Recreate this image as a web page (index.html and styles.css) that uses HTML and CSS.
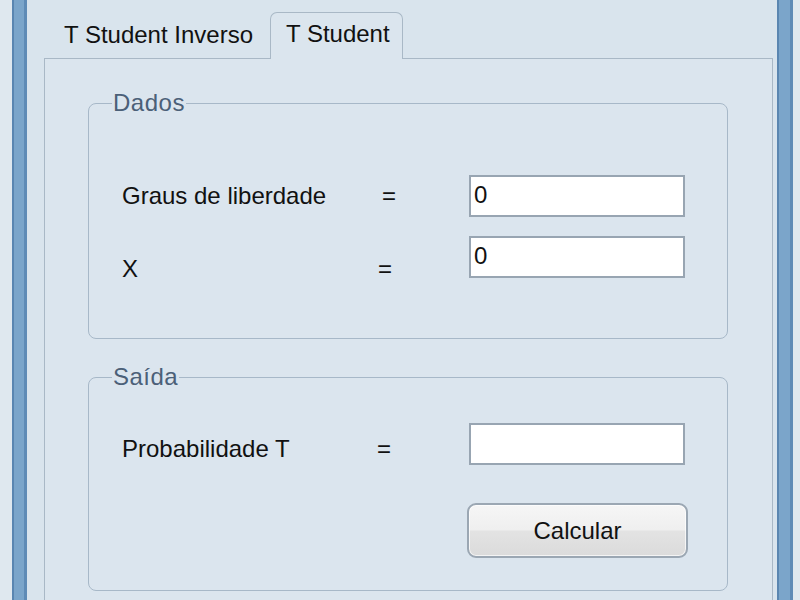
FILE: index.html
```html
<!DOCTYPE html>
<html lang="pt">
<head>
<meta charset="utf-8">
<title>T Student</title>
<link rel="stylesheet" href="styles.css">
</head>
<body>
<div class="window">
  <div class="edge-l"></div>
  <div class="frame frame-l"></div>
  <div class="client">
    <div class="tabs">
      <div class="tab">T Student Inverso</div>
      <div class="tab tab-active">T Student</div>
    </div>
    <div class="panel">
      <fieldset class="group group-dados">
        <legend>Dados</legend>
        <div class="form">
          <span class="lbl">Graus de liberdade</span>
          <span class="eq">=</span>
          <input class="box" type="text" value="0">
          <span class="lbl low">X</span>
          <span class="eq low eq-left">=</span>
          <input class="box" type="text" value="0">
        </div>
      </fieldset>
      <fieldset class="group group-saida">
        <legend>Saída</legend>
        <div class="form form-saida">
          <span class="lbl mid">Probabilidade T</span>
          <span class="eq mid eq-left2">=</span>
          <input class="box" type="text" value="">
          <button class="btn" type="button">Calcular</button>
        </div>
      </fieldset>
    </div>
  </div>
  <div class="frame frame-r"></div>
  <div class="edge-r"></div>
</div>
</body>
</html>
```
FILE: styles.css
```css
* { box-sizing: border-box; }
html, body {
  margin: 0;
  padding: 0;
  width: 800px;
  height: 600px;
  overflow: hidden;
  background: #d9e4ed;
  font-family: "Liberation Sans", Arial, sans-serif;
  font-size: 24px;
  color: #111;
}
.window {
  display: flex;
  height: 600px;
}
.edge-l { width: 12px; background: #dfe8ef; }
.edge-r { width: 7px; background: #dfe8ef; }
.frame {
  background: #7ba5ca;
  border-left: 2px solid #5a86b1;
  border-right: 3px solid #5f8bb6;
}
.frame-l { width: 15px; }
.frame-r { width: 16px; }
.client {
  flex: 1;
  padding: 12px 4px 0 17px;
  display: flex;
  flex-direction: column;
  background: #d9e4ed;
}
.tabs {
  display: flex;
  align-items: flex-end;
  height: 46px;
  position: relative;
  z-index: 1;
}
.tab {
  line-height: 28px;
  padding: 4px 13px 9px 19px;
  border: 1px solid transparent;
  border-bottom: none;
  width: 226px;
  white-space: nowrap;
}
.tab-active {
  width: 133px;
  padding: 7px 12px 10px 15px;
  border-color: #a9b8c6;
  border-radius: 7px 7px 0 0;
  background: #dbe5ee;
  margin-bottom: -1px;
  height: 47px;
}
.panel {
  flex: 1;
  border: 1px solid #a9b8c6;
  border-bottom: none;
  background: #dbe5ee;
  padding: 30px 44px 0 43px;
}
.group {
  margin: 0;
  border: 1px solid #a7b8c8;
  border-radius: 8px;
  padding: 58px 42px 60px 23px;
  min-width: 0;
}
.group legend {
  padding: 0 1px;
  line-height: 28px;
  color: #4b6078;
  letter-spacing: 0.5px;
}
.group-saida {
  margin-top: 24px;
  padding-top: 32px;
  padding-bottom: 32px;
}
.form {
  margin-left: 10px;
  display: grid;
  grid-template-columns: 260px 87px 216px;
  grid-auto-rows: 42px;
  row-gap: 19px;
  align-items: center;
}
.form-saida {
  grid-template-rows: 42px 55px;
  row-gap: 38px;
}
.lbl, .eq {
  line-height: 28px;
  white-space: nowrap;
}
.low { margin-top: 24px; }
.mid { margin-top: 10px; }
.eq-left { margin-left: -4px; }
.eq-left2 { margin-left: -5px; }
.box {
  width: 216px;
  height: 42px;
  border: 2px solid #98a5b2;
  background: #fff;
  font-family: "Liberation Sans", Arial, sans-serif;
  font-size: 24px;
  color: #111;
  padding: 0 0 2px 3px;
  margin: 0;
  outline: none;
}
.btn {
  grid-column: 3;
  width: 221px;
  height: 55px;
  margin-left: -2px;
  border: 2px solid #9ba7b3;
  border-radius: 9px;
  background: linear-gradient(to bottom, #f6f6f6 0%, #efefef 48%, #e3e3e3 52%, #dbdbdb 100%);
  font-family: "Liberation Sans", Arial, sans-serif;
  font-size: 24px;
  color: #111;
  padding: 0;
  box-shadow: inset 0 0 0 1px rgba(255,255,255,0.7);
}
```
